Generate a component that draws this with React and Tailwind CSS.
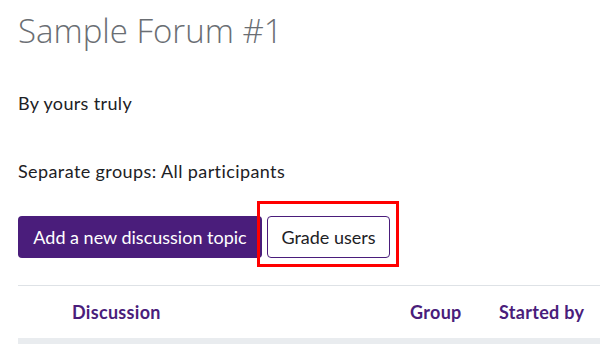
export default function App() {
  return (
    <div className="w-[600px] h-[344px] overflow-hidden bg-white pl-[18px]" style={{ fontFamily: '"Lato", "Liberation Sans", sans-serif' }}>
      <h1 className="pt-[12px] text-[33px] leading-[38px] font-light text-[#6a6e73]" style={{ fontFamily: '"Open Sans", "Lato", sans-serif' }}>
        Sample Forum #1
      </h1>
      <p className="mt-[43px] text-[18px] leading-[20px] tracking-[0.35px] text-[#1d2125]">By yours truly</p>
      <p className="mt-[48px] text-[18px] leading-[20px] tracking-[0.4px] text-[#1d2125]">Separate groups: All participants</p>
      <div className="mt-[35px] flex items-center gap-[5px]">
        <button className="h-[42px] w-[244px] rounded-[4px] bg-[#4a1d7b] text-white text-[18px]">
          Add a new discussion topic
        </button>
        <div className="relative">
          <button className="h-[42px] w-[123px] rounded-[4px] border border-[#4a1d7b] bg-white text-[#1d2125] text-[18px]">
            Grade users
          </button>
          <div className="absolute left-[-10px] right-[-9px] top-[-15px] bottom-[-9px] border-[3px] border-[#ff0000]" />
        </div>
      </div>
      <div className="mt-[27px] border-t border-[#dee2e6] h-[53px] flex items-center text-[18px] font-bold tracking-[0.3px] text-[#4a1d7b]">
        <span className="ml-[54px] w-[338px]">Discussion</span>
        <span className="w-[89px]">Group</span>
        <span>Started by</span>
      </div>
      <div className="h-[10px] bg-[#e9ecef]" />
    </div>
  );
}
